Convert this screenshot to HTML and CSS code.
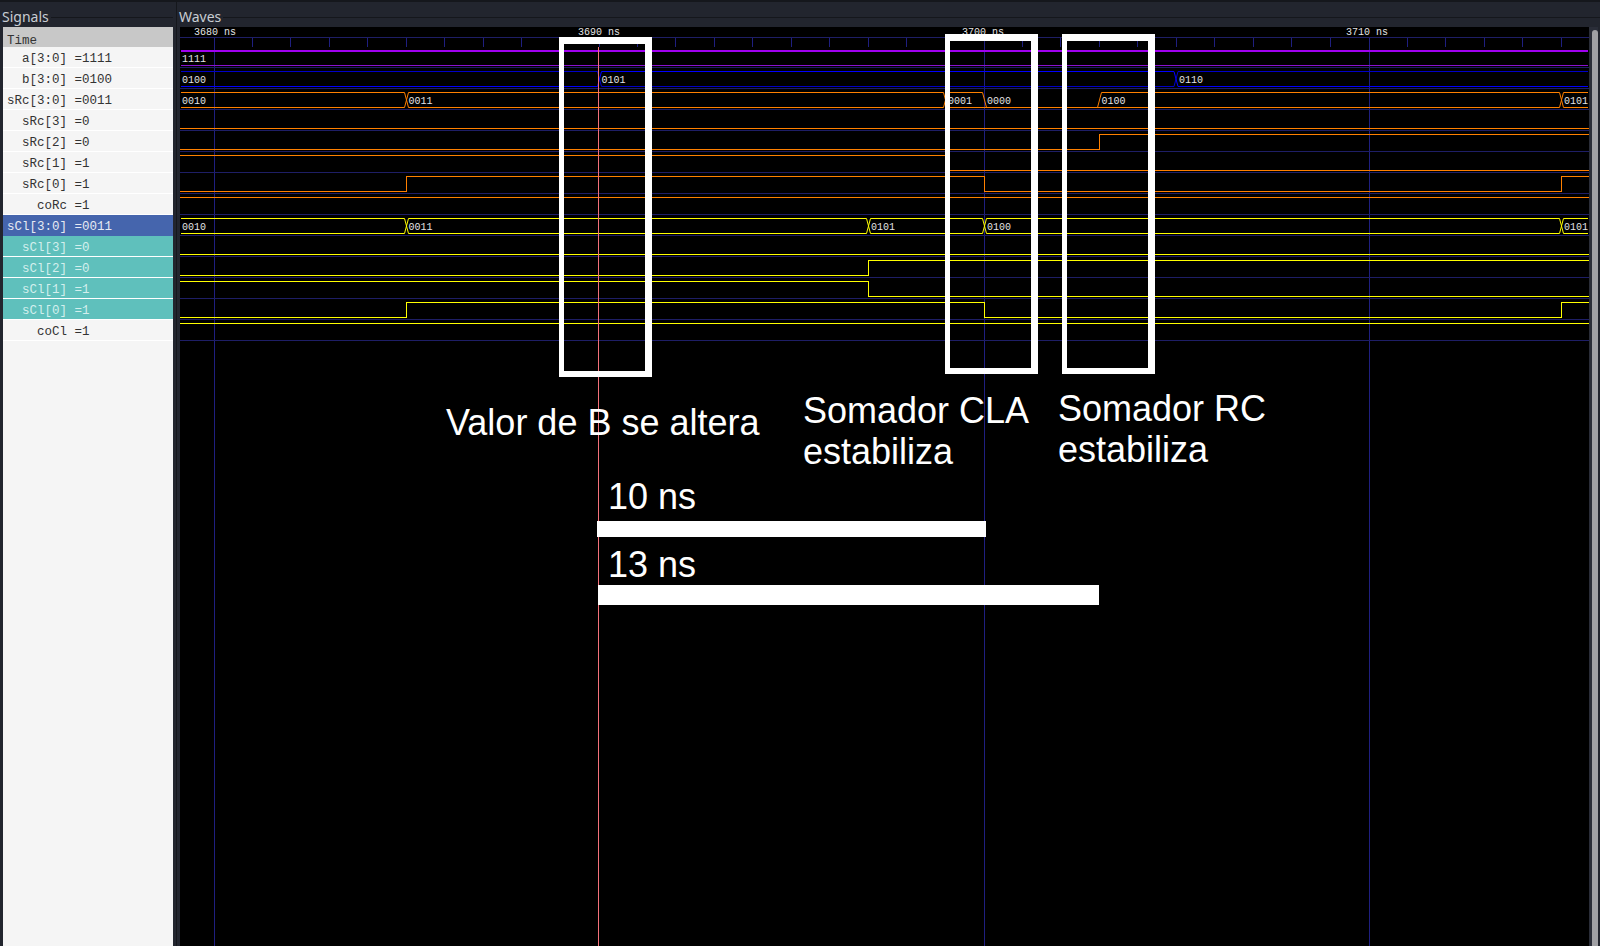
FILE: index.html
```html
<!DOCTYPE html>
<html lang="en">
<head>
  <meta charset="UTF-8" />
  <title>GTKWave - somador</title>
  <link rel="stylesheet" href="styles.css">
</head>
<body>
  <div class="app">
    <section class="signals-pane">
      <div class="pane-title"><span>Signals</span></div>
      <ul class="signal-list">
        <li class="signal-head">Time</li>
        <li>  a[3:0] =1111</li>
        <li>  b[3:0] =0100</li>
        <li>sRc[3:0] =0011</li>
        <li>  sRc[3] =0</li>
        <li>  sRc[2] =0</li>
        <li>  sRc[1] =1</li>
        <li>  sRc[0] =1</li>
        <li>    coRc =1</li>
        <li class="picked">sCl[3:0] =0011</li>
        <li class="picked-bit">  sCl[3] =0</li>
        <li class="picked-bit">  sCl[2] =0</li>
        <li class="picked-bit">  sCl[1] =1</li>
        <li class="picked-bit">  sCl[0] =1</li>
        <li>    coCl =1</li>
      </ul>
    </section>

    <section class="waves-pane">
      <div class="pane-title"><span>Waves</span></div>
      <div class="waves-body">
        <div class="wave-canvas">
          <svg class="wave-svg" width="1409" height="919" viewBox="180 27 1409 919">
            <!-- time ruler -->
            <path class="grid-row" d="M180 37.5H1589" />
            <path class="grid-major" d="M214.5 37.5V946M599.5 37.5V47M984.5 37.5V946M1369.5 37.5V946" />
            <path class="grid-tick" d="M252.5 37.5V47M290.5 37.5V47M329.5 37.5V47M367.5 37.5V47M406.5 37.5V47M444.5 37.5V47M483.5 37.5V47M521.5 37.5V47M560.5 37.5V47M637.5 37.5V47M675.5 37.5V47M714.5 37.5V47M752.5 37.5V47M791.5 37.5V47M829.5 37.5V47M868.5 37.5V47M906.5 37.5V47M945.5 37.5V47M1022.5 37.5V47M1060.5 37.5V47M1099.5 37.5V47M1137.5 37.5V47M1176.5 37.5V47M1214.5 37.5V47M1253.5 37.5V47M1291.5 37.5V47M1330.5 37.5V47M1407.5 37.5V47M1445.5 37.5V47M1484.5 37.5V47M1522.5 37.5V47M1561.5 37.5V47" />
            <text class="time-label" x="194" y="35">3680 ns</text>
            <text class="time-label" x="578" y="35">3690 ns</text>
            <text class="time-label" x="962" y="35">3700 ns</text>
            <text class="time-label" x="1346" y="35">3710 ns</text>

            <!-- row separators -->
            <path class="grid-row" d="M180 67.5H1589M180 88.5H1589M180 109.5H1589M180 130.5H1589M180 151.5H1589M180 172.5H1589M180 193.5H1589M180 214.5H1589M180 235.5H1589M180 256.5H1589M180 277.5H1589M180 298.5H1589M180 319.5H1589M180 340.5H1589" />

            <!-- a, b -->
            <path class="wave-a-top" d="M181 51H1588" />
            <path class="wave-a" d="M181 65.5H1588" />
            <path class="wave-b" d="M181 71.5H597.5L601.5 86.5H1174L1178 71.5H1588" />
            <path class="wave-b-low" d="M181 86.5H597.5L601.5 71.5H1174L1178 86.5H1588" />

            <!-- sRc, 0000 is drawn flat -->
            <path class="wave-rc" d="M181 92.5H404.5L408.5 107.5H943.5L947.5 92.5H982.5L986.5 107.5H1097.5L1101.5 92.5H1559.5L1563.5 107.5H1588" />
            <path class="wave-rc" d="M181 107.5H404.5L408.5 92.5H943.5L947.5 107.5H1559.5L1563.5 92.5H1588" />
            <path class="wave-rc bit" d="M180 128.5H1589" />
            <path class="wave-rc bit" d="M180 149.5H1099.5V134.5H1589" />
            <path class="wave-rc bit" d="M180 155.5H945.5V170.5H1589" />
            <path class="wave-rc bit" d="M180 191.5H406.5V176.5H984.5V191.5H1561.5V176.5H1589" />
            <path class="wave-rc bit" d="M180 197.5H1589" />

            <!-- sCl -->
            <path class="wave-cl" d="M181 218.5H404.5L408.5 233.5H866.5L870.5 218.5H982.5L986.5 233.5H1559.5L1563.5 218.5H1588" />
            <path class="wave-cl" d="M181 233.5H404.5L408.5 218.5H866.5L870.5 233.5H982.5L986.5 218.5H1559.5L1563.5 233.5H1588" />
            <path class="wave-cl bit" d="M180 254.5H1589" />
            <path class="wave-cl bit" d="M180 275.5H868.5V260.5H1589" />
            <path class="wave-cl bit" d="M180 281.5H868.5V296.5H1589" />
            <path class="wave-cl bit" d="M180 317.5H406.5V302.5H984.5V317.5H1561.5V302.5H1589" />
            <path class="wave-cl bit" d="M180 323.5H1589" />

            <!-- bus values -->
            <text class="bus-label" x="182" y="62">1111</text>
            <text class="bus-label" x="182" y="83">0100</text>
            <text class="bus-label" x="601.5" y="83">0101</text>
            <text class="bus-label" x="1179" y="83">0110</text>
            <text class="bus-label" x="182" y="104">0010</text>
            <text class="bus-label" x="408.5" y="104">0011</text>
            <text class="bus-label" x="948" y="104">0001</text>
            <text class="bus-label" x="987" y="104">0000</text>
            <text class="bus-label" x="1101.5" y="104">0100</text>
            <text class="bus-label" x="1564" y="104">0101</text>
            <text class="bus-label" x="182" y="230">0010</text>
            <text class="bus-label" x="408.5" y="230">0011</text>
            <text class="bus-label" x="871" y="230">0101</text>
            <text class="bus-label" x="987" y="230">0100</text>
            <text class="bus-label" x="1564" y="230">0101</text>

            <path class="cursor" d="M598.5 47V946" />
          </svg>

          <div class="mark mark-b"></div>
          <div class="mark mark-cla"></div>
          <div class="mark mark-rc"></div>

          <div class="note note-b">Valor de B se altera</div>
          <div class="note note-cla">Somador CLA
estabiliza</div>
          <div class="note note-rc">Somador RC
estabiliza</div>
          <div class="note note-10">10 ns</div>
          <div class="span-bar span-10"></div>
          <div class="note note-13">13 ns</div>
          <div class="span-bar span-13"></div>
        </div>
        <div class="scrollbar"><div class="scroll-thumb"></div></div>
      </div>
    </section>
  </div>
</body>
</html>
```

FILE: styles.css
```css
* {
  box-sizing: border-box;
}

body {
  margin: 0;
  background: #22252e;
  overflow: hidden;
}

.app {
  display: flex;
  height: 946px;
  border-top: 2px solid #15171c;
}

.pane-title {
  height: 16px;
  margin-bottom: 9px;
  padding-top: 6px;
  border-bottom: 1px solid #15171c;
  font-family: "Noto Sans", sans-serif;
  font-size: 14px;
  line-height: 17px;
  color: #c9cdd3;
}

.pane-title span {
  display: inline-block;
  height: 17px;
  padding-right: 2px;
  background: #22252e;
}

/* signal names */
.signals-pane {
  width: 173px;
  padding-left: 3px;
  display: flex;
  flex-direction: column;
}

.signals-pane .pane-title {
  margin-left: -1px;
}

.signal-list {
  flex: 1;
  margin: 0;
  padding: 0;
  list-style: none;
  background: #f5f5f5;
  font-family: "Liberation Mono", monospace;
  font-size: 12.5px;
  color: #333333;
}

.signal-list li {
  height: 21px;
  padding: 2px 0 0 4px;
  border-bottom: 1px solid #ffffff;
  line-height: 20px;
  white-space: pre;
}

.signal-list .signal-head {
  height: 20px;
  padding-top: 4px;
  background: #c8c8c8;
  border-bottom: 0;
}

.signal-list .picked {
  background: #4565ad;
  border-bottom-color: #4565ad;
  color: #e6e9f2;
}

.signal-list .picked-bit {
  background: #5fc0bc;
  color: #d3efed;
}

/* wave view */
.waves-pane {
  flex: 1;
  margin-left: 3px;
  padding-left: 3px;
  border-left: 1px solid #15171c;
  display: flex;
  flex-direction: column;
}

.waves-pane .pane-title {
  margin-left: -1px;
}

.waves-body {
  flex: 1;
  display: flex;
}

.wave-canvas {
  position: relative;
  width: 1409px;
  height: 919px;
  background: #000000;
  overflow: hidden;
}

.wave-svg {
  display: block;
}

.wave-svg path {
  fill: none;
  stroke-width: 1;
}

.grid-row {
  stroke: #1e1e66;
  shape-rendering: crispEdges;
}

.grid-major,
.grid-tick {
  stroke: #1f1f80;
  shape-rendering: crispEdges;
}

.wave-svg .wave-a-top {
  stroke: #a000f0;
  stroke-width: 2;
  shape-rendering: crispEdges;
}

.wave-a {
  stroke: #8a10d0;
}

.wave-b {
  stroke: #0000c8;
}

.wave-b-low {
  stroke: #0000ff;
}

.wave-rc {
  stroke: #ff8000;
}

.wave-cl {
  stroke: #ffff00;
}

.bit {
  shape-rendering: crispEdges;
}

.cursor {
  stroke: #f4717a;
  shape-rendering: crispEdges;
}

.time-label,
.bus-label {
  font-family: "Liberation Mono", monospace;
  font-size: 10px;
  fill: #e4e4e4;
}

/* hand drawn marks on top of the capture */
.mark {
  position: absolute;
  background: transparent;
  border-style: solid;
  border-color: #ffffff;
  border-width: 7px 7px 6px 5px;
}

.mark-b {
  left: 379px;
  top: 10px;
  width: 93px;
  height: 340px;
}

.mark-cla {
  left: 765px;
  top: 7px;
  width: 93px;
  height: 340px;
}

.mark-rc {
  left: 882px;
  top: 7px;
  width: 93px;
  height: 340px;
}

.note {
  position: absolute;
  font-family: "Liberation Sans", Arial, sans-serif;
  font-size: 36px;
  line-height: 41px;
  color: #ffffff;
  white-space: pre;
}

.note-b {
  left: 266px;
  top: 375px;
}

.note-cla {
  left: 623px;
  top: 363px;
}

.note-rc {
  left: 878px;
  top: 361px;
}

.note-10 {
  left: 428px;
  top: 449px;
}

.note-13 {
  left: 428px;
  top: 517px;
}

.span-bar {
  position: absolute;
  background: #ffffff;
}

.span-10 {
  left: 417px;
  top: 494px;
  width: 389px;
  height: 16px;
}

.span-13 {
  left: 418px;
  top: 558px;
  width: 501px;
  height: 20px;
}

/* scrollbar */
.scrollbar {
  width: 9px;
  height: 919px;
  padding-left: 3px;
  padding-top: 3px;
  background: #2a2d38;
}

.scroll-thumb {
  height: 100%;
  border-radius: 3px 3px 0 0;
  background: #a0a0a4;
}
```
